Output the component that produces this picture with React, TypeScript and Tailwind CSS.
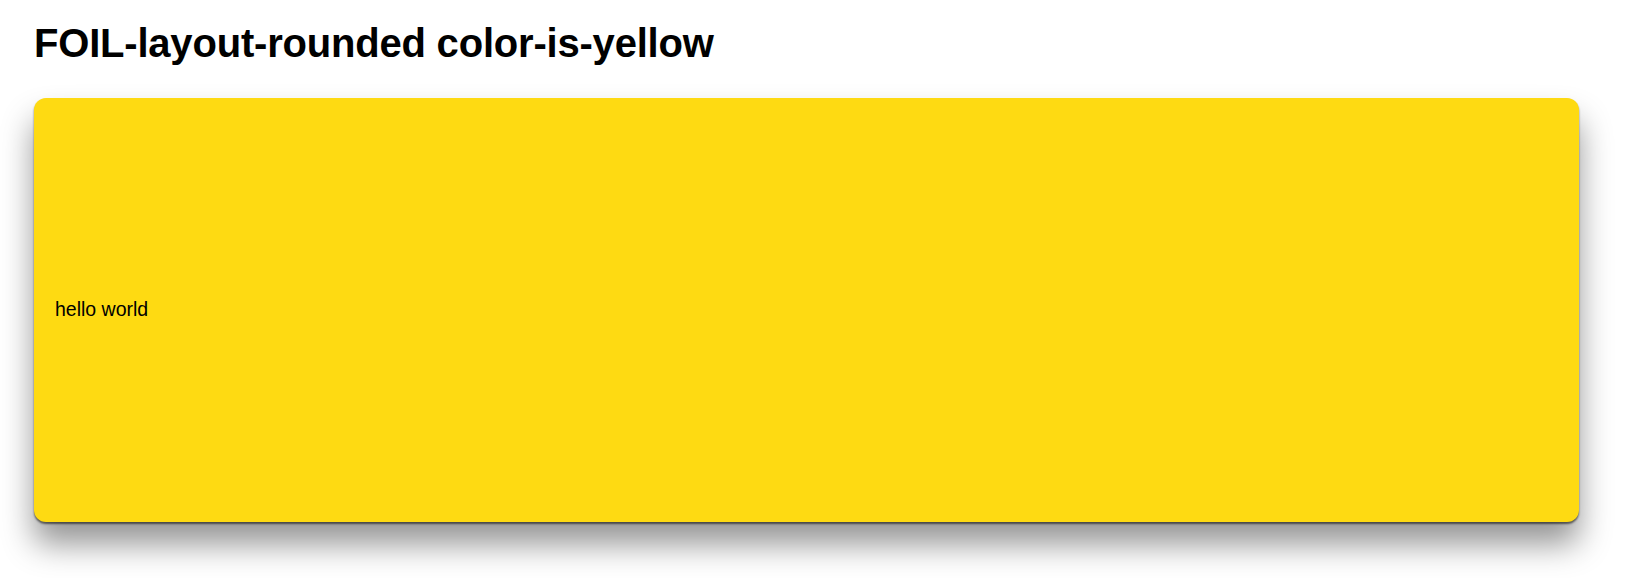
export default function App() {
    return (
        <div className="min-h-[578px] bg-white font-['Liberation_Sans',Arial,sans-serif] text-black">
            <div className="pl-[34px] pr-[46px] pt-[19px]">
                {/* Title */}
                <h1 className="text-[40px] font-bold leading-[48px] tracking-[-0.2px]">
                    FOIL-layout-rounded color-is-yellow
                </h1>

                {/* Yellow card */}
                <div className="mt-[31px] flex h-[424px] items-center rounded-xl bg-[#feda12] px-[21px] shadow-[0_2px_2px_rgba(0,0,0,0.55),0_22px_32px_rgba(0,0,0,0.42)]">
                    <span className="text-[19.5px] leading-none">hello world</span>
                </div>
            </div>
        </div>
    )
}
